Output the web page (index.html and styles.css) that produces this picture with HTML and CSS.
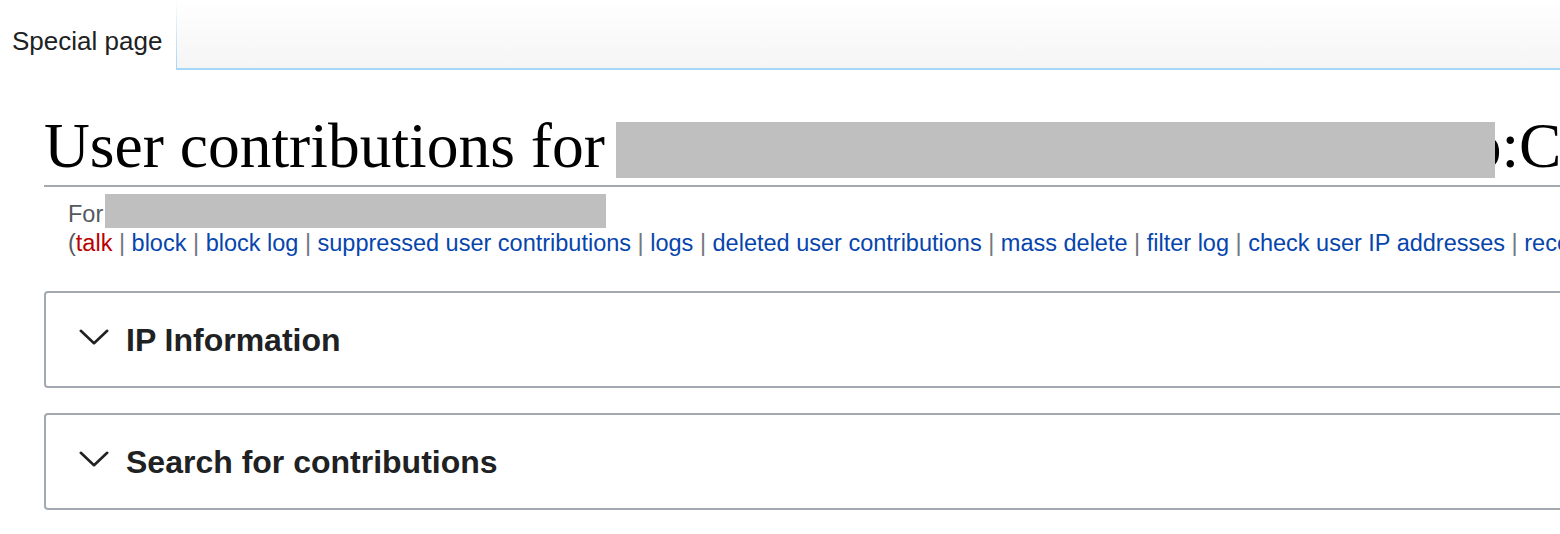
FILE: index.html
```html
<!DOCTYPE html>
<html lang="en">
<head>
<meta charset="utf-8">
<title>User contributions</title>
<link rel="stylesheet" href="styles.css">
</head>
<body>
<header class="tabs">
  <div class="tab-selected">Special page</div>
  <div class="tab-rest"></div>
</header>
<main class="content">
  <h1 class="page-title">User contributions for <span class="redact redact-title"></span><span class="title-tail">o:Contributions</span></h1>
  <div class="content-sub">
    <div class="sub-for">For<span class="redact redact-user"></span></div>
    <div class="tool-links">(<a class="new" href="#">talk</a><span class="sep"> | </span><a href="#">block</a><span class="sep"> | </span><a href="#">block log</a><span class="sep"> | </span><a href="#">suppressed user contributions</a><span class="sep"> | </span><a href="#">logs</a><span class="sep"> | </span><a href="#">deleted user contributions</a><span class="sep"> | </span><a href="#">mass delete</a><span class="sep"> | </span><a href="#">filter log</a><span class="sep"> | </span><a href="#">check user IP addresses</a><span class="sep"> | </span><a href="#">recent changes</a>)</div>
  </div>
  <section class="collapsible">
    <svg class="chevron" width="30" height="16" viewBox="0 0 30 16" aria-hidden="true"><polyline points="1.8,1.8 15,14.2 28.2,1.8" fill="none" stroke="#202122" stroke-width="2.6" stroke-linecap="round" stroke-linejoin="round"/></svg>
    <h2 class="collapsible-title">IP Information</h2>
  </section>
  <section class="collapsible collapsible-next">
    <svg class="chevron" width="30" height="16" viewBox="0 0 30 16" aria-hidden="true"><polyline points="1.8,1.8 15,14.2 28.2,1.8" fill="none" stroke="#202122" stroke-width="2.6" stroke-linecap="round" stroke-linejoin="round"/></svg>
    <h2 class="collapsible-title">Search for contributions</h2>
  </section>
</main>
</body>
</html>
```

FILE: styles.css
```css
html, body {
  margin: 0;
  padding: 0;
  overflow: hidden;
  background: #fff;
}

body {
  width: 1560px;
  font-family: "Liberation Sans", Arial, sans-serif;
  color: #202122;
}

.tabs {
  display: flex;
  height: 70px;
}

.tab-selected {
  box-sizing: border-box;
  height: 70px;
  padding: 26px 14px 0 12px;
  font-size: 26px;
  line-height: 30px;
  color: #202122;
  background: #fff;
}

.tab-rest {
  flex: 1;
  border-bottom: 2px solid #a7d7f9;
  background:
    linear-gradient(to bottom, rgba(167, 215, 249, 0) 0%, #a7d7f9 100%) left top / 1px 100% no-repeat,
    linear-gradient(to bottom, #ffffff 0%, #f5f5f5 100%);
}

.content {
  margin-left: 44px;
  width: 2000px;
}

.page-title {
  margin: 36px 0 0;
  font-family: "Liberation Serif", "Times New Roman", serif;
  font-weight: 400;
  font-size: 63.5px;
  line-height: 79.4px;
  color: #000;
  white-space: nowrap;
  border-bottom: 2px solid #a2a9b1;
}

.redact {
  display: inline-block;
  background: #bfbfbf;
}

.redact-title {
  position: relative;
  z-index: 1;
  width: 879px;
  height: 56px;
  margin-left: -5px;
  vertical-align: -11px;
}

.title-tail {
  margin-left: -25px;
}

.content-sub {
  margin-top: 7px;
  padding-left: 24px;
  font-size: 23.5px;
  line-height: 1.2;
  color: #54595d;
  white-space: nowrap;
}

.redact-user {
  width: 501px;
  height: 34px;
  margin-left: 2px;
  vertical-align: -6px;
}

.tool-links a {
  color: #0645ad;
  text-decoration: none;
}

.tool-links a.new {
  color: #ba0000;
}

.sep {
  color: #72777d;
}

.collapsible {
  box-sizing: border-box;
  height: 97px;
  margin-top: 34.5px;
  padding-left: 33px;
  display: flex;
  align-items: center;
  gap: 17px;
  border: 2px solid #a2a9b1;
  border-radius: 4px;
}

.collapsible-next {
  margin-top: 25px;
}

.chevron {
  flex: none;
  margin-bottom: 5px;
}

.collapsible-title {
  margin: 0;
  font-family: "Liberation Sans", Arial, sans-serif;
  font-weight: 700;
  font-size: 32px;
  line-height: 1.2;
  color: #202122;
}
```
